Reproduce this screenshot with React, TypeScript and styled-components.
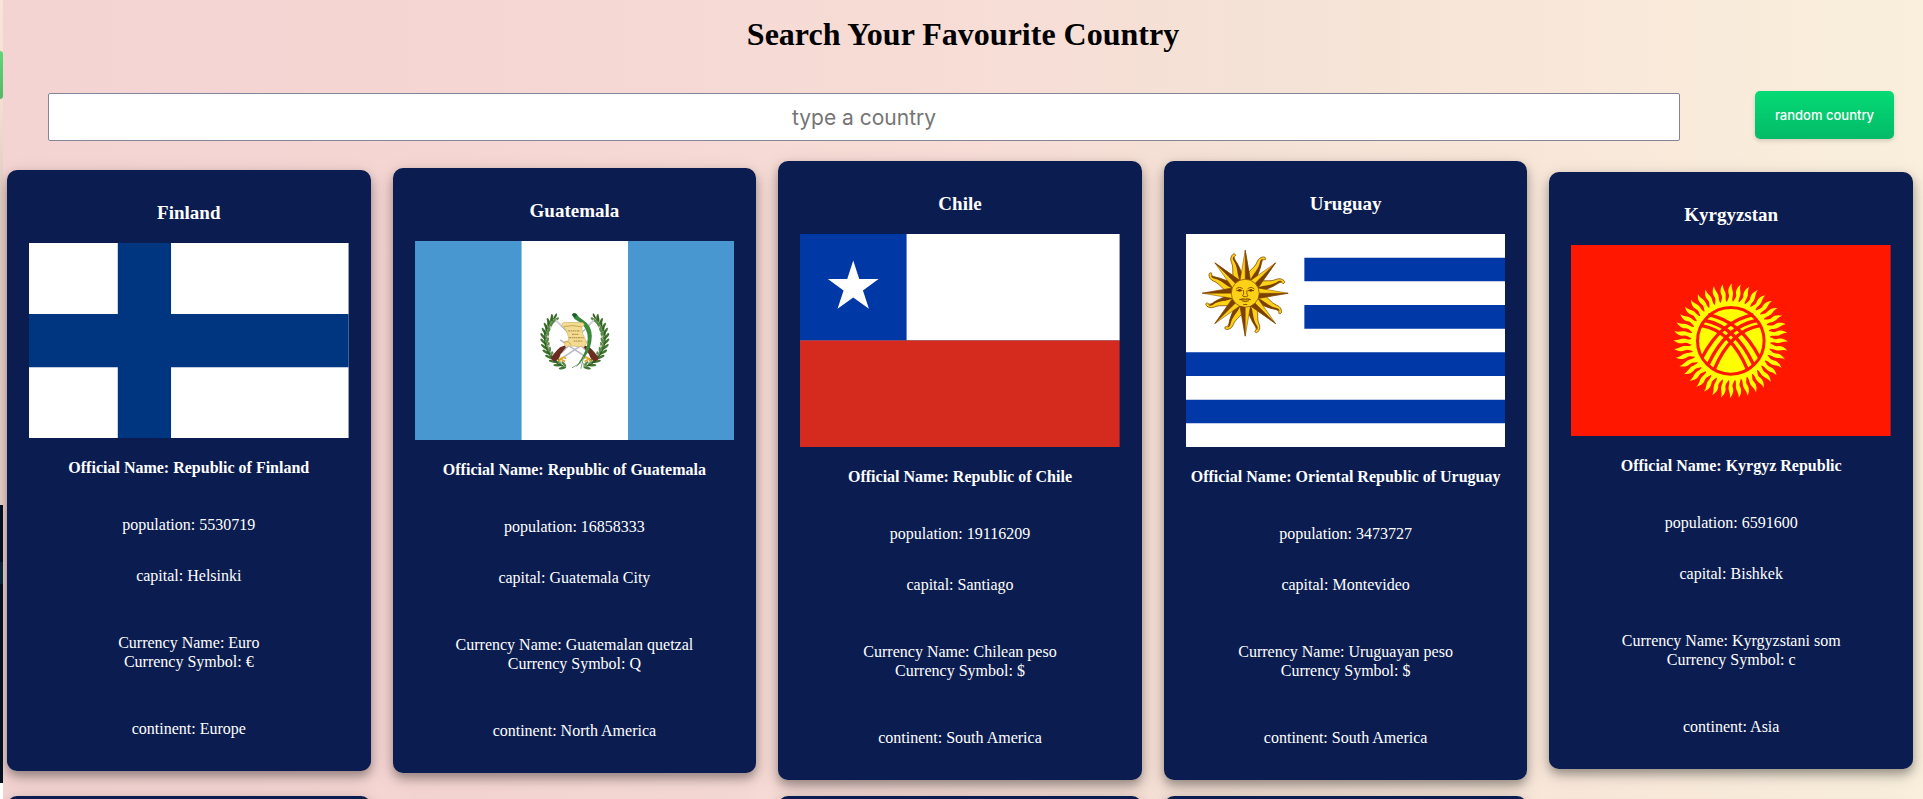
import React, { useState } from "react";
import styled, { createGlobalStyle } from "styled-components";

const GlobalStyle = createGlobalStyle`
  * { box-sizing: border-box; }
  body { margin: 0; }
`;

const Screen = styled.div`
  display: flex;
  height: 100vh;
  overflow: hidden;
  font-family: "Liberation Serif", "Times New Roman", serif;
  font-size: 16px;
  line-height: 19px;
`;

const Edge = styled.div`
  flex: 0 0 3px;
  display: flex;
  flex-direction: column;
  background: linear-gradient(#f9e4d9, #f3dfd2 100px, #e6d3c8 160px, #ecd5ca 500px);
`;

const EdgeBand = styled.div<{ $height?: string; $fill: string; $round?: boolean }>`
  flex: ${(p) => (p.$height ? `0 0 ${p.$height}` : "1 0 0")};
  background: ${(p) => p.$fill};
  border-radius: ${(p) => (p.$round ? "0 3px 3px 0" : "0")};
`;

const Page = styled.main`
  flex: 1;
  min-width: 0;
  background: linear-gradient(to right, #f4d4d2, #f5d6d3 25%, #f7ddd6 50%, #f5e2d6 65%, #f9e8da 82%, #f9efdc);
`;

const Title = styled.h1`
  margin: 0;
  padding: 16px 0 40px;
  font-size: 32px;
  line-height: 37px;
  text-align: center;
  color: #000;
`;

const SearchBar = styled.form`
  display: flex;
  gap: 75px;
  padding: 0 29px 0 45px;
`;

const SearchInput = styled.input`
  flex: 1;
  min-width: 0;
  height: 48px;
  border: 1px solid #85859a;
  border-radius: 2px;
  background: #fff;
  font: 21px Inter, sans-serif;
  text-align: center;
  &::placeholder { color: #757575; opacity: 1; }
`;

const RandomButton = styled.button`
  flex: 0 0 139px;
  height: 48px;
  margin-top: -2px;
  border: 0;
  border-radius: 5px;
  background: linear-gradient(#05da76, #04bb67);
  box-shadow: 0 2px 4px rgba(0, 0, 0, 0.15);
  color: #fff;
  font: 500 13px Inter, sans-serif;
  white-space: nowrap;
  cursor: pointer;
`;

const Grid = styled.section`
  display: grid;
  grid-template-columns: repeat(5, minmax(0, 1fr));
  align-items: center;
  gap: 16px 22px;
  padding: 20px 10px 0 4px;
`;

const Card = styled.article<{ $minHeight?: string }>`
  min-height: ${(p) => p.$minHeight ?? "0"};
  padding: 32px 22px 33px;
  border-radius: 10px;
  background: #0b1d50;
  box-shadow: 0 5px 10px rgba(0, 0, 0, 0.3), 0 6px 20px rgba(0, 0, 0, 0.15);
  color: #fff;
  text-align: center;
`;

const Name = styled.h3`
  margin: 0 0 19px;
  font-size: 19px;
  line-height: 22px;
`;

const Flag = styled.svg`
  display: block;
  width: 100%;
  height: auto;
`;

const Official = styled.h4`
  margin: 20px 0 38px;
  font-size: 16px;
  white-space: nowrap;
`;

const Fact = styled.p<{ $after?: string }>`
  margin: 0 0 ${(p) => p.$after ?? "0"};
`;

const FinlandFlag = () => (
  <Flag viewBox="0 0 1800 1100" role="img" aria-label="Flag of Finland">
    <path fill="#fff" d="M0 0h1800v1100H0z" />
    <path fill="#003580" d="M0 400h1800v300H0zM500 0h300v1100H500z" />
  </Flag>
);

const ChileFlag = () => {
  const points = Array.from({ length: 10 }, (_, i) => {
    const r = i % 2 ? 10.2 : 26.7;
    const a = (i * Math.PI) / 5;
    return `${53.3 + r * Math.sin(a)},${53.3 - r * Math.cos(a)}`;
  }).join(" ");
  return (
    <Flag viewBox="0 0 320 213.3" role="img" aria-label="Flag of Chile">
      <path fill="#fff" d="M0 0h320v106.7H0z" />
      <path fill="#0039a6" d="M0 0h106.7v106.7H0z" />
      <path fill="#d52b1e" d="M0 106.7h320v106.6H0z" />
      <polygon fill="#fff" points={points} />
    </Flag>
  );
};

const UruguayFlag = () => (
  <Flag viewBox="0 0 320 213.3" role="img" aria-label="Flag of Uruguay">
    <path fill="#fff" d="M0 0h320v213.3H0z" />
    <path
      fill="#0038a8"
      d="M118.5 23.7H320v23.7H118.5zM118.5 71.1H320v23.7H118.5zM0 118.5h320v23.7H0zM0 165.9h320v23.7H0z"
    />
    <g transform="translate(59.3 59.3) scale(.3333)" strokeLinejoin="round">
      {Array.from({ length: 8 }, (_, i) => (
        <g key={i} transform={`rotate(${i * 45 + 22.5})`} stroke="#7b3f00" strokeWidth="2">
          <path fill="#fcd116" d="M-17-36C-20-66-2-80-3-101C-3-112 2-119 10-122C15-124 18-120 17-116C10-115 9-108 11-99C15-82 12-60 16-36Z" />
          <path fill="#7b3f00" stroke="none" d="M-1-38C-2-64 10-78 5-104C4-109 6-114 10-116C9-110 10-104 11-99C15-82 12-60 16-36Z" />
        </g>
      ))}
      {Array.from({ length: 8 }, (_, i) => (
        <g key={i} transform={`rotate(${i * 45})`} stroke="#7b3f00" strokeWidth="1.5">
          <path fill="#fcd116" d="M0-129L-16-36H16Z" />
          <path fill="#7b3f00" d="M0-129L0-36H16Z" />
        </g>
      ))}
      <circle r="42" fill="#fcd116" stroke="#7b3f00" strokeWidth="2" />
      <g fill="none" stroke="#7b3f00" strokeWidth="2.5" strokeLinecap="round">
        <path d="M-27-13Q-18-22-8-14M27-13Q18-22 8-14M-25-8Q-18-14-9-8Q-17-5-25-8M25-8Q18-14 9-8Q17-5 25-8" />
        <path d="M-5-8Q-3 4-8 8Q-4 12 0 10Q4 12 8 8Q3 4 5-8M-16 19Q-6 14 0 18Q6 14 16 19Q0 22-16 19M-10 23Q0 29 10 23M-5 34H5" />
      </g>
      <g fill="#7b3f00">
        <circle cx="-17" cy="-9" r="4" />
        <circle cx="17" cy="-9" r="4" />
      </g>
    </g>
  </Flag>
);

const TUNDUK = "M126 166Q214 182 262 296M132 150Q228 168 281 283M145 133Q244 153 299 262";

const KyrgyzFlag = () => (
  <Flag viewBox="0 0 320 192" role="img" aria-label="Flag of Kyrgyzstan">
    <path fill="#ff1700" d="M0 0h320v192H0z" />
    <g transform="translate(160 96) scale(.3333)">
      <circle r="119" fill="#ff0" />
      {Array.from({ length: 40 }, (_, i) => (
        <path
          key={i}
          fill="#ff0"
          transform={`rotate(${i * 9 - 1})`}
          d="M-10-114C-8-126 0-131-4-142C-7-153-2-164 6-172C3-161 8-154 9-145C10-133 3-126 9-114Z"
        />
      ))}
      <circle r="100" fill="#ff0" stroke="#ff1700" strokeWidth="9" />
      <g fill="none" stroke="#ff1700" strokeWidth="10">
        <path transform="translate(-213 -212)" d={TUNDUK} />
        <path transform="scale(-1 1) translate(-213 -212)" d={TUNDUK} />
      </g>
    </g>
  </Flag>
);

const STEM: [number, number, number][] = [
  [98, 78, 25], [86, 88, 10], [77, 102, 5], [71, 117, 0], [67, 133, -5], [67, 149, -10],
  [69, 165, -18], [74, 181, -25], [82, 196, -32], [93, 210, -42], [106, 222, -55], [121, 231, -70],
];

const Branch = () => (
  <g>
    <path d="M105 72C60 105 48 185 130 236" fill="none" stroke="#456c31" strokeWidth="3" />
    {STEM.map(([x, y, angle], i) => (
      <g key={i} transform={`translate(${x} ${y}) rotate(${angle})`}>
        <ellipse cx="-8" cy="0" rx="4" ry="12" fill="#41752f" transform="rotate(-32)" />
        <ellipse cx="8" cy="0" rx="4" ry="11" fill="#568b45" transform="rotate(32)" />
        <ellipse cx="0" cy="-5" rx="3" ry="10" fill="#2f6324" />
        {i % 2 === 0 && <circle cx="8" cy="6" r="3" fill="#e5bfc5" />}
      </g>
    ))}
  </g>
);

const Rifle = () => (
  <g>
    <path d="M222 88L118 192" stroke="#a9abb4" strokeWidth="4" />
    <path d="M222 88L205 102" stroke="#d5d7df" strokeWidth="6" />
    <path d="M130 167L115 173Q92 194 86 210L96 218Q112 214 117 194L134 173Z" fill="#6d2c20" />
    <path d="M115 149L205 209" stroke="#b8bac4" strokeWidth="5" />
    <path d="M190 209Q201 199 213 217M193 218L211 208" stroke="#e4a51c" strokeWidth="5" fill="none" />
  </g>
);

const GuatemalaFlag = () => (
  <Flag viewBox="0 0 320 200" role="img" aria-label="Flag of Guatemala">
    <path fill="#4997d0" d="M0 0h320v200H0z" />
    <path fill="#fff" d="M106.7 0h106.6v200H106.7z" />
    <g transform="translate(109 52) scale(.315)">
      <Branch />
      <g transform="translate(324 0) scale(-1 1)"><Branch /></g>
      <Rifle />
      <g transform="translate(324 0) scale(-1 1)"><Rifle /></g>
      <path
        d="M153 69Q158 60 168 67Q173 77 185 84Q216 104 216 137Q215 176 195 202Q181 223 164 237Q193 198 201 166Q209 126 188 102Q176 91 161 83Z"
        fill="#39893b"
      />
      <path d="M153 69Q160 60 169 70L163 79Z" fill="#176026" />
      <path d="M190 204L181 241M185 219L197 236M181 222L153 238" stroke="#7ba676" strokeWidth="3" />
      <path
        d="M122 97Q128 91 139 94H182Q193 95 191 103L184 110Q184 130 196 149Q203 161 194 169Q175 174 151 168L138 170Q126 166 129 155L143 152Q142 126 127 108Q119 103 122 97Z"
        fill="#f3dc91"
        stroke="#cfae58"
        strokeWidth="2"
      />
      <path d="M127 107Q157 100 184 108M129 157Q145 151 149 165" fill="none" stroke="#c9a34a" strokeWidth="3" />
      <path
        d="M141 121H179M153 132H174M144 142H190M158 153H187"
        stroke="#b69251"
        strokeWidth="4"
        strokeDasharray="6 2 4 2"
      />
    </g>
  </Flag>
);

const COUNTRIES = [
  { name: "Finland", official: "Republic of Finland", population: 5530719, capital: "Helsinki", currency: "Euro", symbol: "€", continent: "Europe", flag: <FinlandFlag /> },
  { name: "Guatemala", official: "Republic of Guatemala", population: 16858333, capital: "Guatemala City", currency: "Guatemalan quetzal", symbol: "Q", continent: "North America", flag: <GuatemalaFlag /> },
  { name: "Chile", official: "Republic of Chile", population: 19116209, capital: "Santiago", currency: "Chilean peso", symbol: "$", continent: "South America", flag: <ChileFlag /> },
  { name: "Uruguay", official: "Oriental Republic of Uruguay", population: 3473727, capital: "Montevideo", currency: "Uruguayan peso", symbol: "$", continent: "South America", flag: <UruguayFlag /> },
  { name: "Kyrgyzstan", official: "Kyrgyz Republic", population: 6591600, capital: "Bishkek", currency: "Kyrgyzstani som", symbol: "c", continent: "Asia", flag: <KyrgyzFlag /> },
];

const NEXT_ROW = ["620px", "600px", "620px", "620px", "600px"];

export default function App() {
  const [query, setQuery] = useState("");
  return (
    <Screen>
      <GlobalStyle />
      <Edge>
        <EdgeBand $height="51px" $fill="transparent" />
        <EdgeBand $height="48px" $fill="linear-gradient(#5dd879, #56b768)" $round />
        <EdgeBand $height="406px" $fill="transparent" />
        <EdgeBand $height="57px" $fill="#021423" />
        <EdgeBand $height="22px" $fill="#0c2a3e" />
        <EdgeBand $height="199px" $fill="#021423" />
        <EdgeBand $fill="#fff" />
      </Edge>
      <Page>
        <Title>Search Your Favourite Country</Title>
        <SearchBar onSubmit={(e) => e.preventDefault()}>
          <SearchInput
            aria-label="Country"
            placeholder="type a country"
            value={query}
            onChange={(e) => setQuery(e.target.value)}
          />
          <RandomButton type="button">random country</RandomButton>
        </SearchBar>
        <Grid>
          {COUNTRIES.map((c) => (
            <Card key={c.name}>
              <Name>{c.name}</Name>
              {c.flag}
              <Official>Official Name: {c.official}</Official>
              <Fact $after="32px">population: {c.population}</Fact>
              <Fact $after="48px">capital: {c.capital}</Fact>
              <Fact>Currency Name: {c.currency}</Fact>
              <Fact $after="48px">Currency Symbol: {c.symbol}</Fact>
              <Fact>continent: {c.continent}</Fact>
            </Card>
          ))}
          {NEXT_ROW.map((height, i) => (
            <Card key={i} $minHeight={height} />
          ))}
        </Grid>
      </Page>
    </Screen>
  );
}
